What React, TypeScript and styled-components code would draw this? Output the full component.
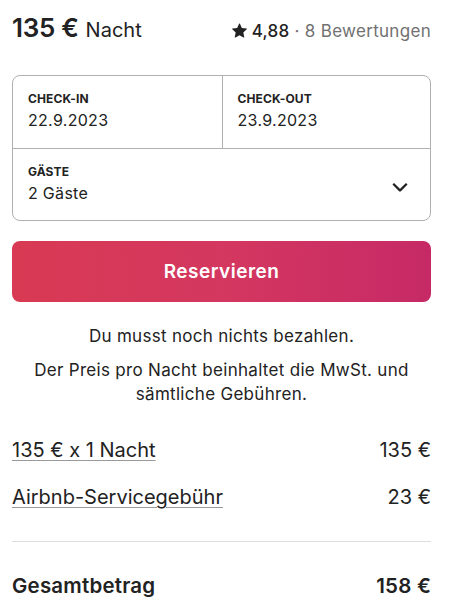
import React from "react";
import styled, { createGlobalStyle } from "styled-components";

const Global = createGlobalStyle`
  html, body { margin: 0; padding: 0; background: #fff; }
  body { font-family: Inter, "Noto Sans", sans-serif; color: #222222; -webkit-font-smoothing: antialiased; }
`;

const Card = styled.div`
  width: 419px;
  padding: 0 19px 0 12px;
  box-sizing: content-box;
`;

const Header = styled.div`
  display: flex;
  align-items: baseline;
  justify-content: space-between;
  height: 56px;
  padding-top: 13px;
  box-sizing: border-box;
  line-height: 30px;
`;

const Price = styled.div`
  display: flex;
  align-items: baseline;
  gap: 7px;
`;

const PriceAmount = styled.span`
  font-size: 26px;
  font-weight: 600;
  letter-spacing: -0.3px;
`;

const PriceUnit = styled.span`
  font-size: 20px;
  font-weight: 400;
`;

const Rating = styled.div`
  display: flex;
  align-items: baseline;
  gap: 5px;
  font-size: 17px;
  letter-spacing: 0.3px;
`;

const Star = styled.svg`
  width: 15px;
  height: 15px;
  align-self: center;
  position: relative;
  top: -1px;
`;

const RatingValue = styled.span`
  font-weight: 500;
`;

const Muted = styled.span`
  color: #717171;
`;

const Picker = styled.div`
  margin-top: 19px;
  border: 1px solid #b0b0b0;
  border-radius: 8px;
  display: grid;
  grid-template-columns: 1fr 1fr;
`;

const Field = styled.div<{ $full?: boolean; $right?: boolean }>`
  grid-column: ${(p) => (p.$full ? "1 / span 2" : "auto")};
  border-left: ${(p) => (p.$right ? "1px solid #b0b0b0" : "none")};
  border-top: ${(p) => (p.$full ? "1px solid #b0b0b0" : "none")};
  padding: 15px 15px 0 15px;
  height: 72px;
  box-sizing: border-box;
  display: flex;
  align-items: center;
  justify-content: space-between;
`;

const FieldText = styled.div`
  display: flex;
  flex-direction: column;
  align-self: flex-start;
`;

const Label = styled.div`
  font-size: 12px;
  font-weight: 700;
  letter-spacing: 0.1px;
  line-height: 16px;
`;

const Value = styled.div`
  font-size: 16px;
  letter-spacing: 0.3px;
  line-height: 22px;
  margin-top: 2px;
`;

const Chevron = styled.svg`
  width: 18px;
  height: 18px;
  margin-right: 6px;
  margin-top: -12px;
`;

const ReserveButton = styled.button`
  display: block;
  width: 100%;
  height: 61px;
  margin-top: 20px;
  border: none;
  border-radius: 8px;
  background: linear-gradient(90deg, #d83a53 0%, #d4375f 50%, #c62a66 100%);
  color: #fff;
  font-family: inherit;
  font-size: 19px;
  letter-spacing: 0.5px;
  font-weight: 600;
`;

const Note = styled.p<{ $top: number }>`
  margin: ${(p) => p.$top}px 20px 0;
  text-align: center;
  font-size: 17px;
  letter-spacing: 0.3px;
  line-height: 24px;
`;

const Lines = styled.div`
  margin-top: 32px;
  display: flex;
  flex-direction: column;
  gap: 23px;
`;

const Line = styled.div`
  display: flex;
  justify-content: space-between;
  font-size: 20px;
  line-height: 24px;
`;

const LineLabel = styled.span`
  text-decoration: underline;
  text-decoration-color: #9a9a9a;
  text-decoration-thickness: 1px;
  text-underline-offset: 3px;
`;

const Divider = styled.hr`
  border: none;
  border-top: 1px solid #dddddd;
  margin: 32px 0 0;
`;

const Total = styled.div`
  display: flex;
  justify-content: space-between;
  margin-top: 32px;
  font-size: 20.5px;
  font-weight: 600;
  letter-spacing: 0.2px;
  line-height: 24px;
`;

export default function App() {
  return (
    <>
      <Global />
      <Card>
        <Header>
          <Price>
            <PriceAmount>135 €</PriceAmount>
            <PriceUnit>Nacht</PriceUnit>
          </Price>
          <Rating>
            <Star viewBox="0 0 32 32" fill="#222">
              <path d="M15.1 1.58l-4.13 8.88-9.86 1.27a1 1 0 0 0-.54 1.74l7.3 6.57-1.97 9.85a1 1 0 0 0 1.48 1.06l8.62-5 8.63 5a1 1 0 0 0 1.48-1.06l-1.97-9.85 7.3-6.57a1 1 0 0 0-.55-1.73l-9.86-1.28-4.12-8.88a1 1 0 0 0-1.82 0z" />
            </Star>
            <RatingValue>4,88</RatingValue>
            <Muted>· 8 Bewertungen</Muted>
          </Rating>
        </Header>
        <Picker>
          <Field>
            <FieldText>
              <Label>CHECK-IN</Label>
              <Value>22.9.2023</Value>
            </FieldText>
          </Field>
          <Field $right>
            <FieldText>
              <Label>CHECK-OUT</Label>
              <Value>23.9.2023</Value>
            </FieldText>
          </Field>
          <Field $full>
            <FieldText>
              <Label>GÄSTE</Label>
              <Value>2 Gäste</Value>
            </FieldText>
            <Chevron viewBox="0 0 32 32" fill="none" stroke="#222" strokeWidth="4">
              <path d="M28 12L16.7 23.3a1 1 0 0 1-1.4 0L4 12" />
            </Chevron>
          </Field>
        </Picker>
        <ReserveButton>Reservieren</ReserveButton>
        <Note $top={22}>Du musst noch nichts bezahlen.</Note>
        <Note $top={10}>Der Preis pro Nacht beinhaltet die MwSt. und sämtliche Gebühren.</Note>
        <Lines>
          <Line>
            <LineLabel>135 € x 1 Nacht</LineLabel>
            <span>135 €</span>
          </Line>
          <Line>
            <LineLabel>Airbnb-Servicegebühr</LineLabel>
            <span>23 €</span>
          </Line>
        </Lines>
        <Divider />
        <Total>
          <span>Gesamtbetrag</span>
          <span>158 €</span>
        </Total>
      </Card>
    </>
  );
}
